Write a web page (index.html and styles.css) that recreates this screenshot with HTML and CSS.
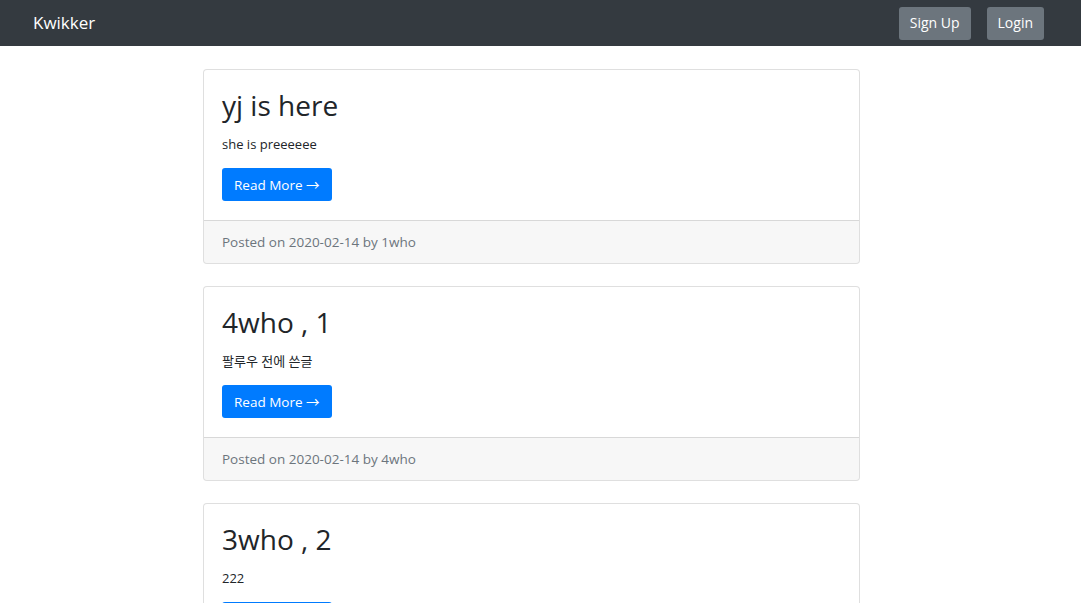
FILE: index.html
```html
<!DOCTYPE html>
<html lang="ko">
<head>
<meta charset="utf-8">
<title>Kwikker</title>
<link rel="stylesheet" href="styles.css">
</head>
<body>
<nav class="navbar">
  <a class="brand" href="#">Kwikker</a>
  <div class="nav-actions">
    <a class="btn btn-secondary" href="#">Sign Up</a>
    <a class="btn btn-secondary" href="#">Login</a>
  </div>
</nav>
<main class="layout">
  <div class="posts">
    <article class="card">
      <div class="card-body">
        <h2 class="card-title">yj is here</h2>
        <p class="card-text">she is preeeeee</p>
        <a class="btn btn-primary" href="#">Read More &rarr;</a>
      </div>
      <div class="card-footer">Posted on 2020-02-14 by 1who</div>
    </article>
    <article class="card">
      <div class="card-body">
        <h2 class="card-title">4who , 1</h2>
        <p class="card-text">팔루우 전에 쓴글</p>
        <a class="btn btn-primary" href="#">Read More &rarr;</a>
      </div>
      <div class="card-footer">Posted on 2020-02-14 by 4who</div>
    </article>
    <article class="card">
      <div class="card-body">
        <h2 class="card-title">3who , 2</h2>
        <p class="card-text">222</p>
        <a class="btn btn-primary" href="#">Read More &rarr;</a>
      </div>
      <div class="card-footer">Posted on 2020-02-14 by 3who</div>
    </article>
  </div>
</main>
</body>
</html>
```
FILE: styles.css
```css
* { box-sizing: border-box; }
html, body { margin: 0; padding: 0; }
body {
  font-family: "Open Sans", "Noto Sans", "Noto Sans CJK KR", sans-serif;
  color: #212529;
  background: #fff;
  font-size: 14px;
  overflow: hidden;
}
a { text-decoration: none; }

.navbar {
  height: 46px;
  background: #343a40;
  display: flex;
  align-items: center;
  justify-content: space-between;
  padding: 0 37px 0 33px;
}
.brand {
  color: #fff;
  font-size: 17px;
  line-height: 24px;
}
.nav-actions {
  display: flex;
  gap: 16px;
}
.btn {
  display: inline-flex;
  align-items: center;
  justify-content: center;
  height: 33px;
  padding: 0 11px;
  border-radius: 3px;
  color: #fff;
  font-size: 14px;
  line-height: 20px;
}
.btn-secondary { background: #6c757d; }
.btn-primary { background: #007bff; padding: 0 12px; font-size: 13.5px; }

.layout {
  display: grid;
  grid-template-columns: 203px 657px 1fr;
  padding-top: 23px;
}
.posts {
  grid-column: 2;
  display: flex;
  flex-direction: column;
  gap: 22px;
}
.card {
  border: 1px solid rgba(0,0,0,.125);
  border-radius: 4px;
  background: #fff;
  overflow: hidden;
}
.card-body {
  padding: 18px 18px 19px;
  display: flex;
  flex-direction: column;
  align-items: flex-start;
}
.card-title {
  margin: 0 0 12px;
  font-size: 28px;
  line-height: 34px;
  font-weight: 500;
}
.card-text {
  margin: 0 0 14px;
  font-size: 13px;
  line-height: 20px;
}
.card-footer {
  height: 43px;
  padding: 11px 18px;
  border-top: 1px solid rgba(0,0,0,.125);
  background: rgba(0,0,0,.03);
  color: #6c757d;
  font-size: 13.5px;
  line-height: 20px;
}
```
